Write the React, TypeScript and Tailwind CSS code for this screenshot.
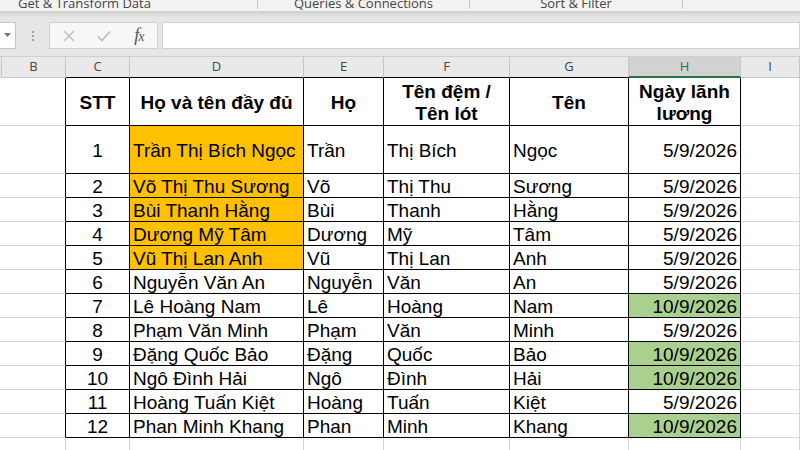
import React from "react";

type Row = {
  n: string;
  full: string;
  ho: string;
  dem: string;
  ten: string;
  date: string;
  orange?: boolean;
  green?: boolean;
};

const rows: Row[] = [
  { n: "1", full: "Trần Thị Bích Ngọc", ho: "Trần", dem: "Thị Bích", ten: "Ngọc", date: "5/9/2026", orange: true },
  { n: "2", full: "Võ Thị Thu Sương", ho: "Võ", dem: "Thị Thu", ten: "Sương", date: "5/9/2026", orange: true },
  { n: "3", full: "Bùi Thanh Hằng", ho: "Bùi", dem: "Thanh", ten: "Hằng", date: "5/9/2026", orange: true },
  { n: "4", full: "Dương Mỹ Tâm", ho: "Dương", dem: "Mỹ", ten: "Tâm", date: "5/9/2026", orange: true },
  { n: "5", full: "Vũ Thị Lan Anh", ho: "Vũ", dem: "Thị Lan", ten: "Anh", date: "5/9/2026", orange: true },
  { n: "6", full: "Nguyễn Văn An", ho: "Nguyễn", dem: "Văn", ten: "An", date: "5/9/2026" },
  { n: "7", full: "Lê Hoàng Nam", ho: "Lê", dem: "Hoàng", ten: "Nam", date: "10/9/2026", green: true },
  { n: "8", full: "Phạm Văn Minh", ho: "Phạm", dem: "Văn", ten: "Minh", date: "5/9/2026" },
  { n: "9", full: "Đặng Quốc Bảo", ho: "Đặng", dem: "Quốc", ten: "Bảo", date: "10/9/2026", green: true },
  { n: "10", full: "Ngô Đình Hải", ho: "Ngô", dem: "Đình", ten: "Hải", date: "10/9/2026", green: true },
  { n: "11", full: "Hoàng Tuấn Kiệt", ho: "Hoàng", dem: "Tuấn", ten: "Kiệt", date: "5/9/2026" },
  { n: "12", full: "Phan Minh Khang", ho: "Phan", dem: "Minh", ten: "Khang", date: "10/9/2026", green: true },
];

const cols = "grid grid-cols-[66px_64px_174px_80px_126px_119px_112px_59px]";
const font = { fontFamily: '"Liberation Sans", Arial, sans-serif' };

function Gray({ h, blackRight }: { h: string; blackRight?: boolean }) {
  return (
    <div
      className={`${h} border-b border-r border-b-[#d4d4d4] ${blackRight ? "border-r-black" : "border-r-[#d4d4d4]"}`}
    />
  );
}

function DataRow({ r, h }: { r: Row; h: string }) {
  const cell = `${h} border-b border-r border-black flex items-center pt-[3px] text-[19px] text-black overflow-hidden whitespace-nowrap`;
  return (
    <div className={cols}>
      <Gray h={h} blackRight />
      <div className={`${cell} justify-center`}>{r.n}</div>
      <div className={`${cell} pl-[3px] ${r.orange ? "bg-[#ffc000]" : ""}`}>{r.full}</div>
      <div className={`${cell} pl-[3px]`}>{r.ho}</div>
      <div className={`${cell} pl-[3px]`}>{r.dem}</div>
      <div className={`${cell} pl-[3px]`}>{r.ten}</div>
      <div className={`${cell} justify-end pr-[3px] ${r.green ? "bg-[#a9d08e]" : ""}`}>{r.date}</div>
      <Gray h={h} />
    </div>
  );
}

export default function App() {
  const head = "h-[48px] border-b border-r border-black flex items-center justify-center pt-[2px] text-center text-[19px] font-bold leading-[22px] text-black";
  return (
    <div className="w-[800px] h-[450px] overflow-hidden bg-white" style={font}>
      {/* ribbon group labels */}
      <div className="h-[11px] bg-[#f3f3f3] flex overflow-hidden text-[13px] text-[#444]" style={{ fontFamily: '"Open Sans", "Liberation Sans", sans-serif' }}>
        <div className="flex-none w-[346px] ml-[-88px] flex justify-center border-r border-[#c8c8c8] h-[9px]">
          <span className="leading-[13px] mt-[-3px]">Get &amp; Transform Data</span>
        </div>
        <div className="flex-none w-[212px] flex justify-center border-r border-[#c8c8c8] h-[9px]">
          <span className="leading-[13px] mt-[-3px]">Queries &amp; Connections</span>
        </div>
        <div className="flex-none w-[213px] flex justify-center border-r border-[#c8c8c8] h-[9px]">
          <span className="leading-[13px] mt-[-3px]">Sort &amp; Filter</span>
        </div>
      </div>
      <div className="h-[6px] bg-gradient-to-b from-[#cfcfcf] to-[#e6e6e6]" />
      {/* formula bar */}
      <div className="h-[40px] bg-[#e6e6e6] border-b border-[#d0d0d0] pt-[5px] flex items-start">
        <div className="w-[16px] h-[27px] bg-white flex items-center justify-center border-y border-r border-[#c6c6c6]">
          <svg width="8" height="5" viewBox="0 0 8 5"><path d="M0 0h7L3.5 4z" fill="#777" /></svg>
        </div>
        <div className="w-[33px] h-[27px] flex flex-col items-center justify-center gap-[2px]">
          <div className="w-[2px] h-[2px] bg-[#a0a0a0]" />
          <div className="w-[2px] h-[2px] bg-[#a0a0a0]" />
          <div className="w-[2px] h-[2px] bg-[#a0a0a0]" />
        </div>
        <div className="w-[109px] h-[27px] bg-[#f7f7f7] border border-[#d0d0d0] flex items-center">
          <div className="w-[36px] flex justify-center ml-[1px]">
            <svg width="12" height="12" viewBox="0 0 12 12"><path d="M1 1L11 11M11 1L1 11" stroke="#bcbcbc" strokeWidth="1.4" /></svg>
          </div>
          <div className="w-[36px] flex justify-center">
            <svg width="14" height="12" viewBox="0 0 14 12"><path d="M1 6.5L5 10.5L13 1.5" stroke="#bcbcbc" strokeWidth="1.6" fill="none" /></svg>
          </div>
          <div className="w-[36px] flex justify-center items-baseline text-[#555] italic text-[18px] leading-[18px]" style={{ fontFamily: '"Liberation Serif", serif' }}>
            <span>f</span><span className="text-[14px] ml-[-1px]">x</span>
          </div>
        </div>
        <div className="ml-[4px] flex-1 h-[27px] bg-white border border-[#d0d0d0]" />
      </div>
      {/* column headers */}
      <div className={`${cols} h-[21px] bg-[#e9e9e9] text-[13px] text-[#444]`} style={{ fontFamily: '"Open Sans", "Liberation Sans", sans-serif' }}>
        {["B", "C", "D", "E", "F", "G", "H", "I"].map((c, i) => {
          const isH = c === "H";
          const table = i >= 1 && i <= 6;
          return (
            <div
              key={c}
              className={`h-[21px] flex items-center justify-center border-r border-r-[#c6c6c6] ${
                isH
                  ? "bg-[#d2d2d2] text-[#217346] border-b-2 border-b-[#217346]"
                  : table
                  ? "border-b border-b-black"
                  : "border-b border-b-[#c6c6c6]"
              } ${i === 0 ? "border-l border-l-[#c6c6c6] ml-[1px]" : ""}`}
            >
              {c}
            </div>
          );
        })}
      </div>
      {/* header row */}
      <div className={cols}>
        <Gray h="h-[48px]" blackRight />
        <div className={head}>STT</div>
        <div className={head}>Họ và tên đầy đủ</div>
        <div className={head}>Họ</div>
        <div className={head}>Tên đệm /<br />Tên lót</div>
        <div className={head}>Tên</div>
        <div className={head}>Ngày lãnh<br />lương</div>
        <Gray h="h-[48px]" />
      </div>
      {rows.map((r, i) => (
        <DataRow key={r.n} r={r} h={i === 0 ? "h-[48px]" : "h-[24px]"} />
      ))}
      <div className={cols}>
        {Array.from({ length: 8 }).map((_, i) => (
          <Gray key={i} h="h-[24px]" />
        ))}
      </div>
    </div>
  );
}
